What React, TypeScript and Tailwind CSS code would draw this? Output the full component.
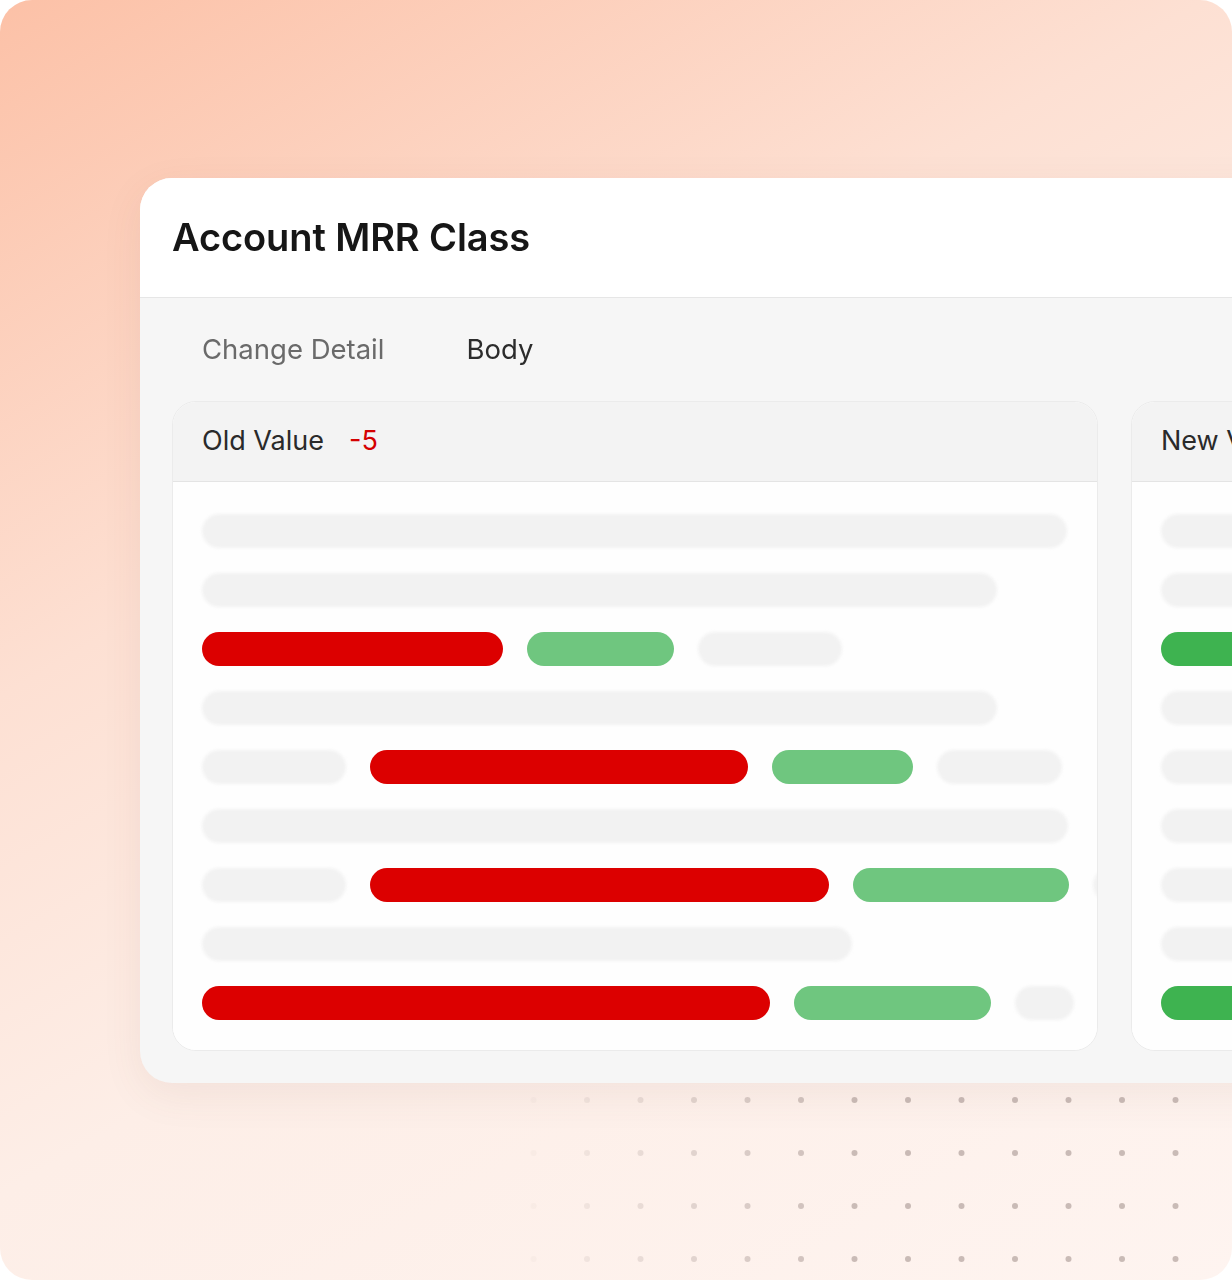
import React from "react";

type Seg = { c: "red" | "green" | "gray"; w: number };

const OLD_ROWS: Seg[][] = [
  [{ c: "gray", w: 865 }],
  [{ c: "gray", w: 795 }],
  [{ c: "red", w: 301 }, { c: "green", w: 147 }, { c: "gray", w: 144 }],
  [{ c: "gray", w: 795 }],
  [{ c: "gray", w: 144 }, { c: "red", w: 378 }, { c: "green", w: 141 }, { c: "gray", w: 125 }],
  [{ c: "gray", w: 866 }],
  [{ c: "gray", w: 144 }, { c: "red", w: 459 }, { c: "green", w: 216 }, { c: "gray", w: 60 }],
  [{ c: "gray", w: 650 }],
  [{ c: "red", w: 568 }, { c: "green", w: 197 }, { c: "gray", w: 59 }],
];

const NEW_ROWS: Seg[][] = [
  [{ c: "gray", w: 865 }],
  [{ c: "gray", w: 795 }],
  [{ c: "green", w: 340 }, { c: "gray", w: 144 }],
  [{ c: "gray", w: 795 }],
  [{ c: "gray", w: 144 }, { c: "green", w: 420 }, { c: "gray", w: 125 }],
  [{ c: "gray", w: 866 }],
  [{ c: "gray", w: 144 }, { c: "green", w: 500 }, { c: "gray", w: 60 }],
  [{ c: "gray", w: 650 }],
  [{ c: "green", w: 600 }, { c: "gray", w: 59 }],
];

function Bar({ seg, isNew }: { seg: Seg; isNew?: boolean }) {
  const cls =
    seg.c === "red"
      ? "bg-[#dc0000]"
      : seg.c === "green"
        ? isNew
          ? "bg-[#3eb350]"
          : "bg-[#6fc67f]"
        : "bg-[#f2f2f2] blur-[1.5px]";
  return <div className={`h-[34px] shrink-0 rounded-full ${cls}`} style={{ width: seg.w }} />;
}

function Panel({ title, delta, rows, isNew }: { title: string; delta?: string; rows: Seg[][]; isNew?: boolean }) {
  return (
    <div className="w-[926px] shrink-0 overflow-hidden rounded-[24px] border border-[#ebebeb] bg-white">
      <div className="flex h-[80px] items-center gap-[25px] border-b border-[#e4e4e4] bg-[#f3f3f3] px-[29px] text-[27px] text-[#2a2a2a]">
        <span>{title}</span>
        {delta && <span className="text-[#d40000]">{delta}</span>}
      </div>
      <div className="flex flex-col gap-[25px] bg-[#fefefe] px-[29px] pb-[30px] pt-[32px]">
        {rows.map((row, i) => (
          <div key={i} className="flex gap-[24px]">
            {row.map((s, j) => (
              <Bar key={j} seg={s} isNew={isNew} />
            ))}
          </div>
        ))}
      </div>
    </div>
  );
}

function Dots() {
  const cols = Array.from({ length: 14 }, (_, i) => 480 + i * 53.5);
  const rows = [1100, 1153, 1206, 1259];
  return (
    <svg className="pointer-events-none absolute left-0 top-0" width="1232" height="1280">
      <defs>
        <linearGradient id="fade" x1="500" x2="860" y1="0" y2="0" gradientUnits="userSpaceOnUse">
          <stop offset="0" stopColor="#fff" stopOpacity="0" />
          <stop offset="1" stopColor="#fff" stopOpacity="1" />
        </linearGradient>
        <mask id="m">
          <rect x="0" y="0" width="1232" height="1280" fill="url(#fade)" />
        </mask>
      </defs>
      <g mask="url(#m)" fill="#bfb0ab">
        {rows.map((y) =>
          cols.map((x) => <circle key={`${x}-${y}`} cx={x} cy={y} r="3" opacity={0.85} />)
        )}
      </g>
    </svg>
  );
}

export default function App() {
  return (
    <div className="min-h-screen bg-white" style={{ fontFamily: "Inter, 'Noto Sans', sans-serif" }}>
      <div className="relative h-[1280px] w-[1232px] overflow-hidden rounded-[32px] bg-[linear-gradient(150deg,#fcc1a7_0%,#fde0d3_35%,#fdeee7_60%,#fef4f0_100%)]">
        <Dots />
        <div className="relative flex pl-[140px] pt-[178px]">
          <div className="w-[1400px] shrink-0 overflow-hidden rounded-[32px] bg-[#f6f6f6] shadow-[0_12px_40px_rgba(120,80,60,0.08)]">
            <div className="flex h-[120px] items-center border-b border-[#e6e6e6] bg-white px-[32px]">
              <h1 className="text-[38px] font-semibold tracking-[-0.1px] text-[#161616]">Account MRR Class</h1>
            </div>
            <div className="flex h-[103px] items-center gap-[82px] px-[62px] text-[27.5px]">
              <span className="text-[#6a6a6a]">Change Detail</span>
              <span className="text-[#2c2c2c]">Body</span>
            </div>
            <div className="flex gap-[33px] px-[32px] pb-[32px]">
              <Panel title="Old Value" delta="-5" rows={OLD_ROWS} />
              <Panel title="New Value" delta="+5" rows={NEW_ROWS} isNew />
            </div>
          </div>
        </div>
      </div>
    </div>
  );
}
